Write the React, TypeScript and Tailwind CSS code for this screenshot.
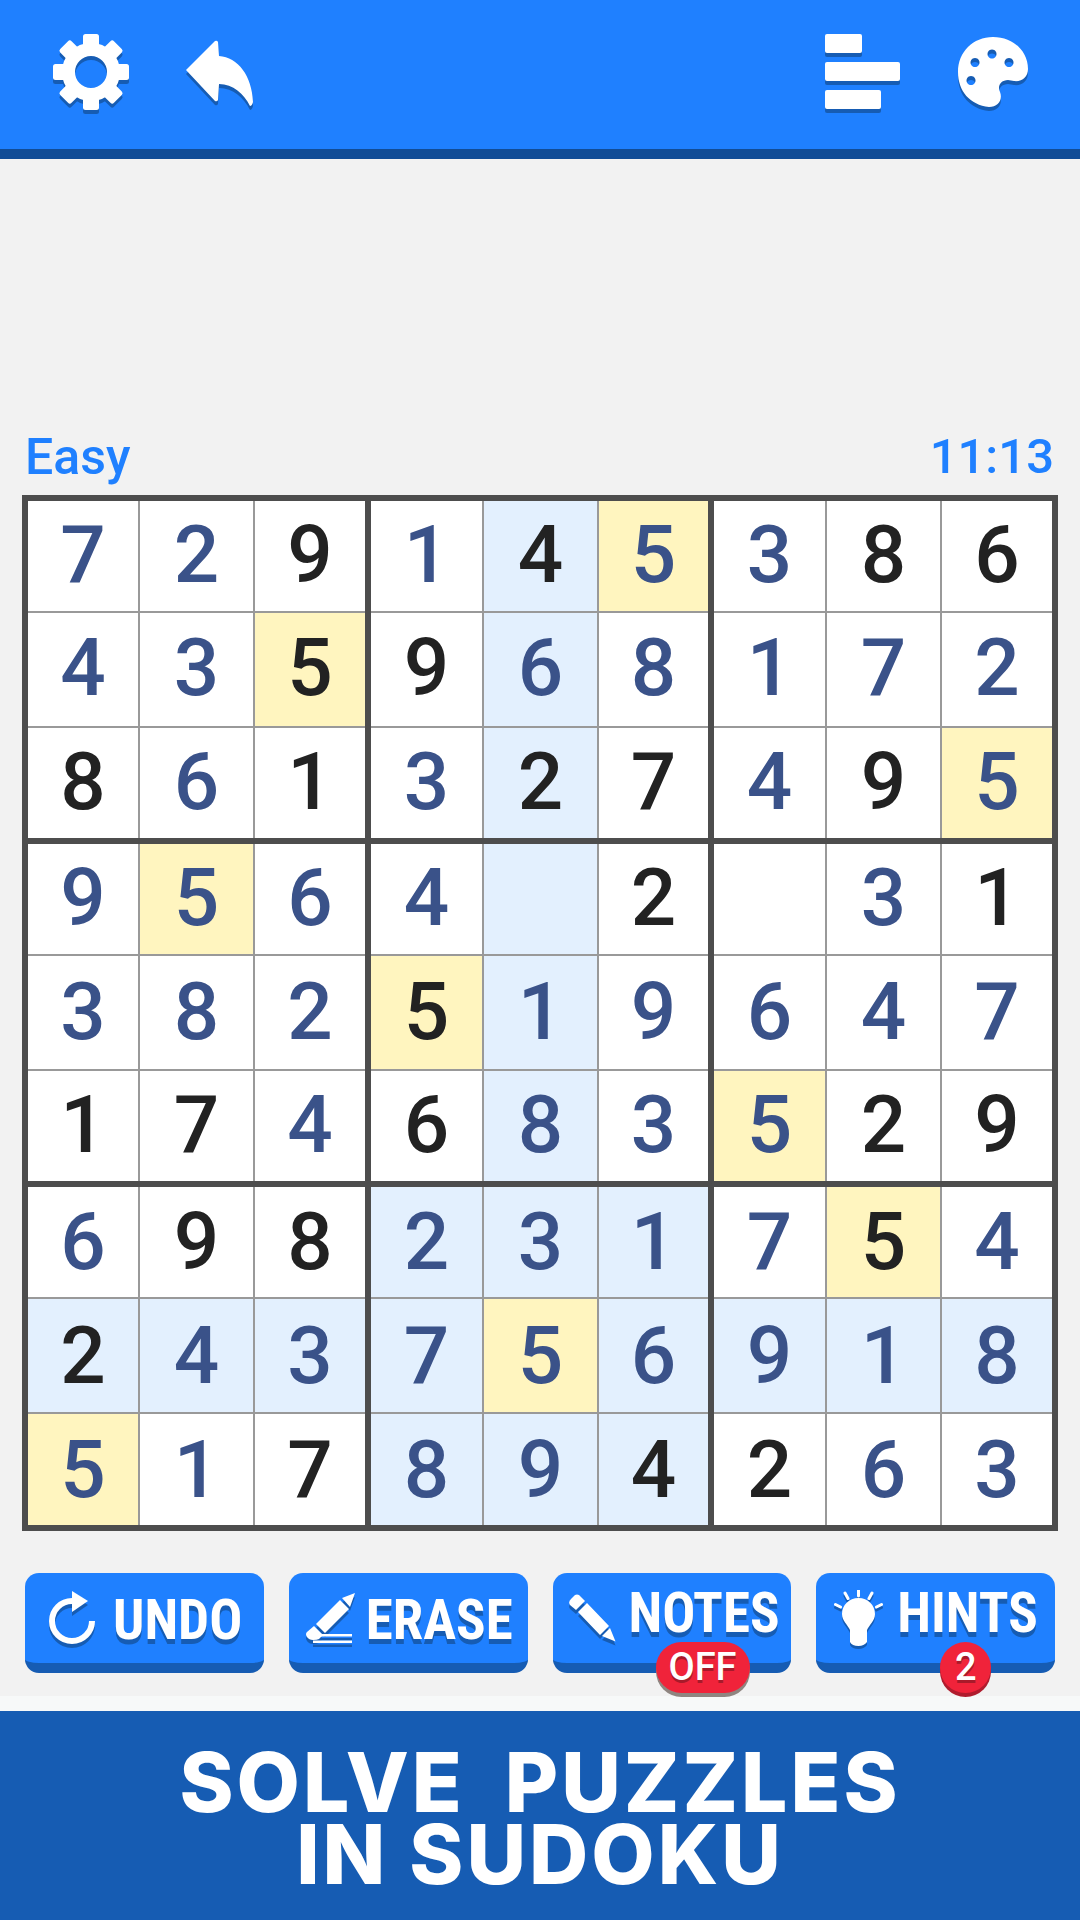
import React from "react";

const DIGITS = [
  "729145386",
  "435968172",
  "861327495",
  "9564 2 31",
  "382519647",
  "174683529",
  "698231754",
  "243756918",
  "517894263",
];

// 1 = given digit (dark), 0 = entered digit (blue)
const GIVEN = [
  "001010011",
  "001100000",
  "101011010",
  "000001001",
  "000100000",
  "110100011",
  "011000010",
  "100000000",
  "001001100",
];

const SHADOW = "drop-shadow-[0_4px_0_#165cb3]";

function cellBackground(row: number, col: number) {
  if (DIGITS[row][col] === "5") return "bg-[#fff5bf]";
  const inBox = row >= 6 && col >= 3 && col <= 5;
  if (col === 4 || row === 7 || inBox) return "bg-[#e3f0fe]";
  return "bg-white";
}

function Cell({ row, col }: { row: number; col: number }) {
  const digit = DIGITS[row][col];
  const color = GIVEN[row][col] === "1" ? "text-[#222222]" : "text-[#3a5289]";
  const nudge = row < 3 ? "pb-[3px]" : row < 6 ? "pb-[2px]" : "pb-0";
  return (
    <div
      className={`flex items-center justify-center text-[80px] leading-none font-medium ${nudge} ${cellBackground(row, col)} ${color}`}
    >
      {digit.trim()}
    </div>
  );
}

function Block({ top, left }: { top: number; left: number }) {
  const offsets = [0, 1, 2];
  const cols = left === 0 ? "grid-cols-[110px_113px_1fr]" : "grid-cols-[111px_113px_1fr]";
  return (
    <div className={`grid grid-rows-[110px_113px_1fr] gap-[2px] bg-[#999999] ${cols}`}>
      {offsets.map((r) =>
        offsets.map((c) => <Cell key={`${r}-${c}`} row={top + r} col={left + c} />)
      )}
    </div>
  );
}

function Board() {
  const starts = [0, 3, 6];
  return (
    <div className="mx-[22px] grid grid-cols-[337px_337px_338px] grid-rows-[337px_337px_338px] gap-[6px] border-[6px] border-[#4d4d4d] bg-[#4d4d4d]">
      {starts.map((t) => starts.map((l) => <Block key={`${t}-${l}`} top={t} left={l} />))}
    </div>
  );
}

function GearIcon() {
  const teeth = [0, 45, 90, 135, 180, 225, 270, 315];
  return (
    <svg viewBox="0 0 76 76" className={`ml-[1px] h-[76px] w-[76px] ${SHADOW}`}>
      <circle cx="38" cy="38" r="22.5" fill="none" stroke="white" strokeWidth="13" />
      {teeth.map((a) => (
        <rect
          key={a}
          x="30"
          y="0"
          width="16"
          height="14"
          rx="2.5"
          fill="white"
          transform={`rotate(${a} 38 38)`}
        />
      ))}
    </svg>
  );
}

function ReplyIcon() {
  return (
    <svg viewBox="0 0 68 68" className={`mt-[4px] ml-[57px] h-[68px] w-[68px] ${SHADOW}`}>
      <path
        d="M0 30 L29 1 Q31 0 32 2 L33 16 C52 17 66 36 67 62 Q66 66 64 66 C58 54 47 44 33 44 L32 60 Q31 62 29 61 Z"
        fill="white"
      />
    </svg>
  );
}

function ScoresIcon() {
  return (
    <svg viewBox="0 0 76 76" className={`h-[76px] w-[76px] ${SHADOW}`}>
      <rect x="0" y="0" width="37" height="19" rx="2" fill="white" />
      <rect x="0" y="28" width="75" height="19" rx="2" fill="white" />
      <rect x="0" y="56" width="56" height="19" rx="2" fill="white" />
    </svg>
  );
}

function PaletteIcon() {
  return (
    <svg viewBox="0 0 70 70" className={`ml-[57px] h-[70px] w-[70px] ${SHADOW}`}>
      <path
        fillRule="evenodd"
        fill="white"
        d="M35 0 C55 0 70 14 70 32 C70 40 64 45 56 44 L50 43 C43 43 39 49 42 55 C45 63 40 70 31 70 C12 68 0 54 0 35 C0 15 15 0 35 0 Z M17 21 a4.5 4.5 0 1 0 0.01 0 Z M34 12.5 a4.5 4.5 0 1 0 0.01 0 Z M51 21 a4.5 4.5 0 1 0 0.01 0 Z M13 39 a4.5 4.5 0 1 0 0.01 0 Z"
      />
    </svg>
  );
}

function RedoArrowIcon() {
  return (
    <svg viewBox="0 0 46 54" className={`h-[54px] w-[46px] shrink-0 ${SHADOW}`}>
      <path d="M23 10 A20 20 0 1 0 43 30" fill="none" stroke="white" strokeWidth="6" />
      <path d="M23 0 L39 10 L23 21 Z" fill="white" />
    </svg>
  );
}

function EraseIcon() {
  return (
    <svg viewBox="0 0 49 51" className={`h-[51px] w-[49px] shrink-0 ${SHADOW}`}>
      <path d="M49 0 L36 5 L44 14 Z M34 7 L43 16 L19 40 L10 31 Z" fill="white" />
      <path d="M8 33 L17 42 L13 46 Q11 47 7 47 Q3 47 1 44 Q-1 41 1 39 Z" fill="white" />
      <rect x="14" y="41" width="32" height="2.5" fill="white" />
      <rect x="7" y="47.5" width="39" height="2.5" fill="white" />
    </svg>
  );
}

function PencilIcon() {
  return (
    <svg viewBox="0 0 48 48" className={`h-[48px] w-[48px] shrink-0 ${SHADOW}`}>
      <path d="M3 5 L7 1 Q9 0 11 1 L17 7 L8 16 L2 11 Q0 8 3 5 Z" fill="white" />
      <path d="M10 18 L19 9 L41 32 L32 41 Z M34 42 L42 34 L47.5 47.5 Z" fill="white" />
    </svg>
  );
}

function BulbIcon() {
  return (
    <svg viewBox="0 0 49 57" className="h-[57px] w-[49px] shrink-0 drop-shadow-[0_3px_0_#165cb3]">
      <path
        d="M24.5 8 C34 8 41 15 41 24 C41 31 35 35 33 40 L33 52 Q30 56 24.5 56 Q18 56 16 52 L16 40 C14 35 8 31 8 24 C8 15 15 8 24.5 8 Z"
        fill="white"
      />
      <path
        d="M24.5 0 V6 M11 3 L14 8.5 M38 3 L35 8.5 M1.5 14.5 L6.5 17 M47.5 14.5 L42.5 17"
        stroke="white"
        strokeWidth="3"
        strokeLinecap="round"
      />
    </svg>
  );
}

type ActionProps = {
  icon: React.ReactNode;
  label: string;
  spacing: string;
  raised?: boolean;
  badge?: React.ReactNode;
};

function ActionButton({ icon, label, spacing, raised, badge }: ActionProps) {
  return (
    <div
      className={`relative flex h-[100px] items-center rounded-[14px] border-b-[10px] border-[#165cb3] bg-[#1f80ff] ${spacing}`}
    >
      {icon}
      <span
        className={`text-[55px] leading-none font-bold text-white [font-stretch:75%] [text-shadow:0_5px_0_#165cb3] ${raised ? "pb-[10px]" : "pt-[4px]"}`}
      >
        {label}
      </span>
      {badge}
    </div>
  );
}

export default function App() {
  return (
    <div className="flex h-[1920px] w-[1080px] flex-col overflow-hidden bg-[#f2f2f2] font-['Roboto',sans-serif]">
      <header className="flex h-[159px] items-center justify-between border-b-[10px] border-[#114c96] bg-[#1f80ff] pr-[52px] pb-[6px] pl-[52px]">
        <div className="flex items-center">
          <GearIcon />
          <ReplyIcon />
        </div>
        <div className="flex items-center">
          <ScoresIcon />
          <PaletteIcon />
        </div>
      </header>

      <div className="mt-[261px] flex h-[75px] items-start justify-between pr-[26px] pl-[25px] font-medium text-[#1f80ff]">
        <span className="text-[50px]">Easy</span>
        <span className="text-[49px]">11:13</span>
      </div>

      <Board />

      <div className="mt-[42px] grid grid-cols-4 gap-[25px] px-[25px]">
        <ActionButton icon={<RedoArrowIcon />} label="UNDO" spacing="gap-[18px] pl-[24px]" />
        <ActionButton icon={<EraseIcon />} label="ERASE" spacing="gap-[11px] pl-[17px]" />
        <ActionButton
          icon={<PencilIcon />}
          label="NOTES"
          spacing="gap-[13px] pl-[15px]"
          raised
          badge={
            <span className="absolute top-[69px] left-[103px] flex h-[51px] w-[94px] items-center justify-center rounded-full bg-[#f0233a] text-[38px] font-medium text-white shadow-[0_4px_0_#8f8580] [text-shadow:0_3px_0_#a81a2a]">
              OFF
            </span>
          }
        />
        <ActionButton
          icon={<BulbIcon />}
          label="HINTS"
          spacing="gap-[14px] pl-[18px]"
          raised
          badge={
            <span className="absolute top-[69px] left-[124px] flex h-[51px] w-[51px] items-center justify-center rounded-full bg-[#f0233a] text-[38px] font-medium text-white shadow-[0_4px_0_#b01c2e] [text-shadow:0_3px_0_#a81a2a]">
              2
            </span>
          }
        />
      </div>

      <div className="mt-[23px] h-[15px] bg-[#f7f9f9]" />

      <footer className="flex flex-1 flex-col items-center justify-center bg-[#165cb3] pt-[6px] font-['Inter',sans-serif] text-[82px] leading-[72px] font-extrabold tracking-[3px] text-white">
        <span className="[word-spacing:19px]">SOLVE PUZZLES</span>
        <span>IN SUDOKU</span>
      </footer>
    </div>
  );
}
